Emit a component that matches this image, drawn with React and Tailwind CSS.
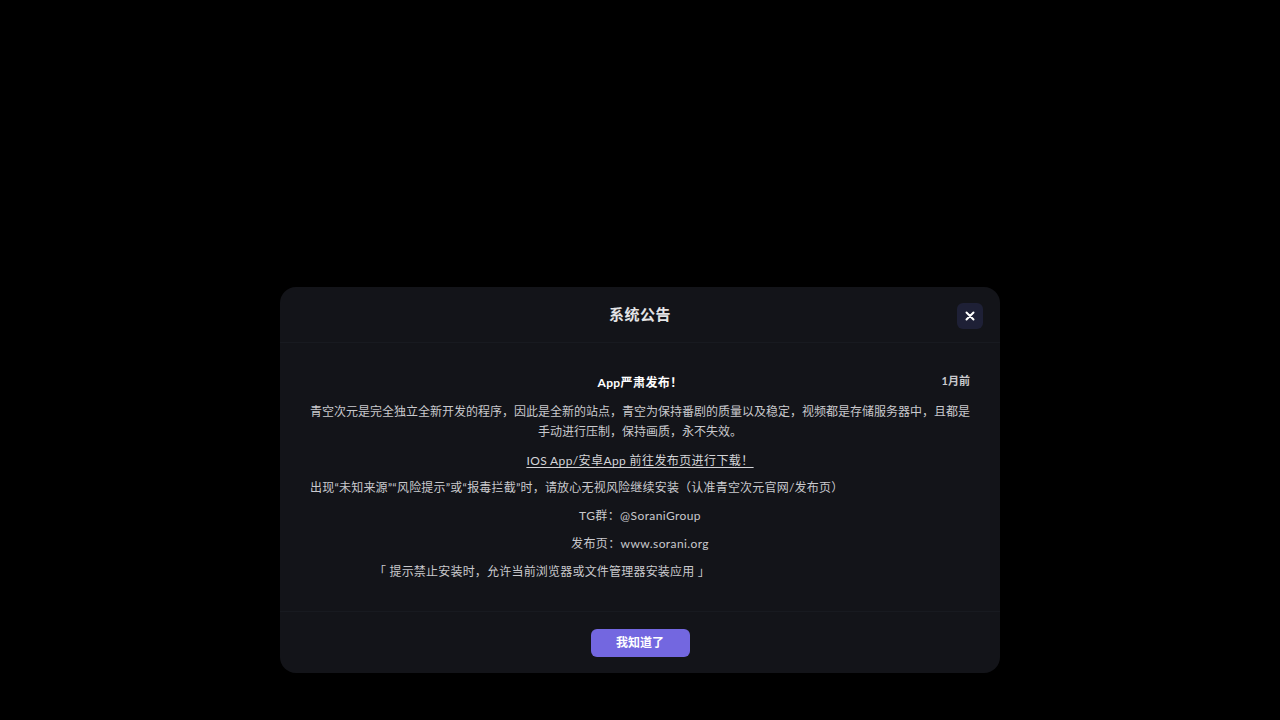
export default function App() {
  const font = { fontFamily: '"Lato", "Noto Sans CJK SC", sans-serif' };
  return (
    <div className="w-full h-[720px] bg-black flex justify-center pt-[287px]" style={font}>
      <div className="w-[720px] h-[386px] bg-[#131419] rounded-[16px] flex flex-col overflow-hidden">
        <div className="relative h-[56px] flex items-center justify-center border-b border-[#181a20] shrink-0">
          <div className="text-[15px] font-semibold text-[#e4e4e6] tracking-[0.5px]">系统公告</div>
          <button className="absolute right-[17px] top-[16px] w-[26px] h-[26px] rounded-[6px] bg-[#1e2036] flex items-center justify-center">
            <svg width="10" height="10" viewBox="0 0 10 10">
              <path d="M1.5 1.5 L8.5 8.5 M8.5 1.5 L1.5 8.5" stroke="#ffffff" strokeWidth="2" strokeLinecap="round" />
            </svg>
          </button>
        </div>
        <div className="flex-1 px-[30px] pt-[30px] text-[12px] leading-[20px] text-[#c9c9cd] tracking-[0.4px]">
          <div className="relative flex justify-center">
            <div className="font-bold text-white text-[12px]">App严肃发布！</div>
            <div className="absolute right-0 top-[-2px] text-[11px] font-bold text-[#c9c9cd] tracking-normal">1月前</div>
          </div>
          <p className="text-center mt-[9px] whitespace-nowrap tracking-normal">
            青空次元是完全独立全新开发的程序，因此是全新的站点，青空为保持番剧的质量以及稳定，视频都是存储服务器中，且都是
            <br />
            手动进行压制，保持画质，永不失效。
          </p>
          <p className="text-center mt-[9px]">
            <span className="underline underline-offset-2 text-[#d4d4d8]">IOS App/安卓App 前往发布页进行下载！</span>
          </p>
          <p className="mt-[7px] tracking-[0.2px]">出现“未知来源”“风险提示”或“报毒拦截”时，请放心无视风险继续安装（认准青空次元官网/发布页）</p>
          <p className="text-center mt-[8px]">TG群：@SoraniGroup</p>
          <p className="text-center mt-[8px]">发布页：www.sorani.org</p>
          <p className="mt-[8px] pl-[64px] tracking-[0.2px]">「 提示禁止安装时，允许当前浏览器或文件管理器安装应用 」</p>
        </div>
        <div className="h-[62px] shrink-0 border-t border-[#181a20] flex items-center justify-center">
          <button className="w-[99px] h-[28px] rounded-[6px] bg-[#7367e0] text-white text-[12px] font-bold">我知道了</button>
        </div>
      </div>
    </div>
  );
}
